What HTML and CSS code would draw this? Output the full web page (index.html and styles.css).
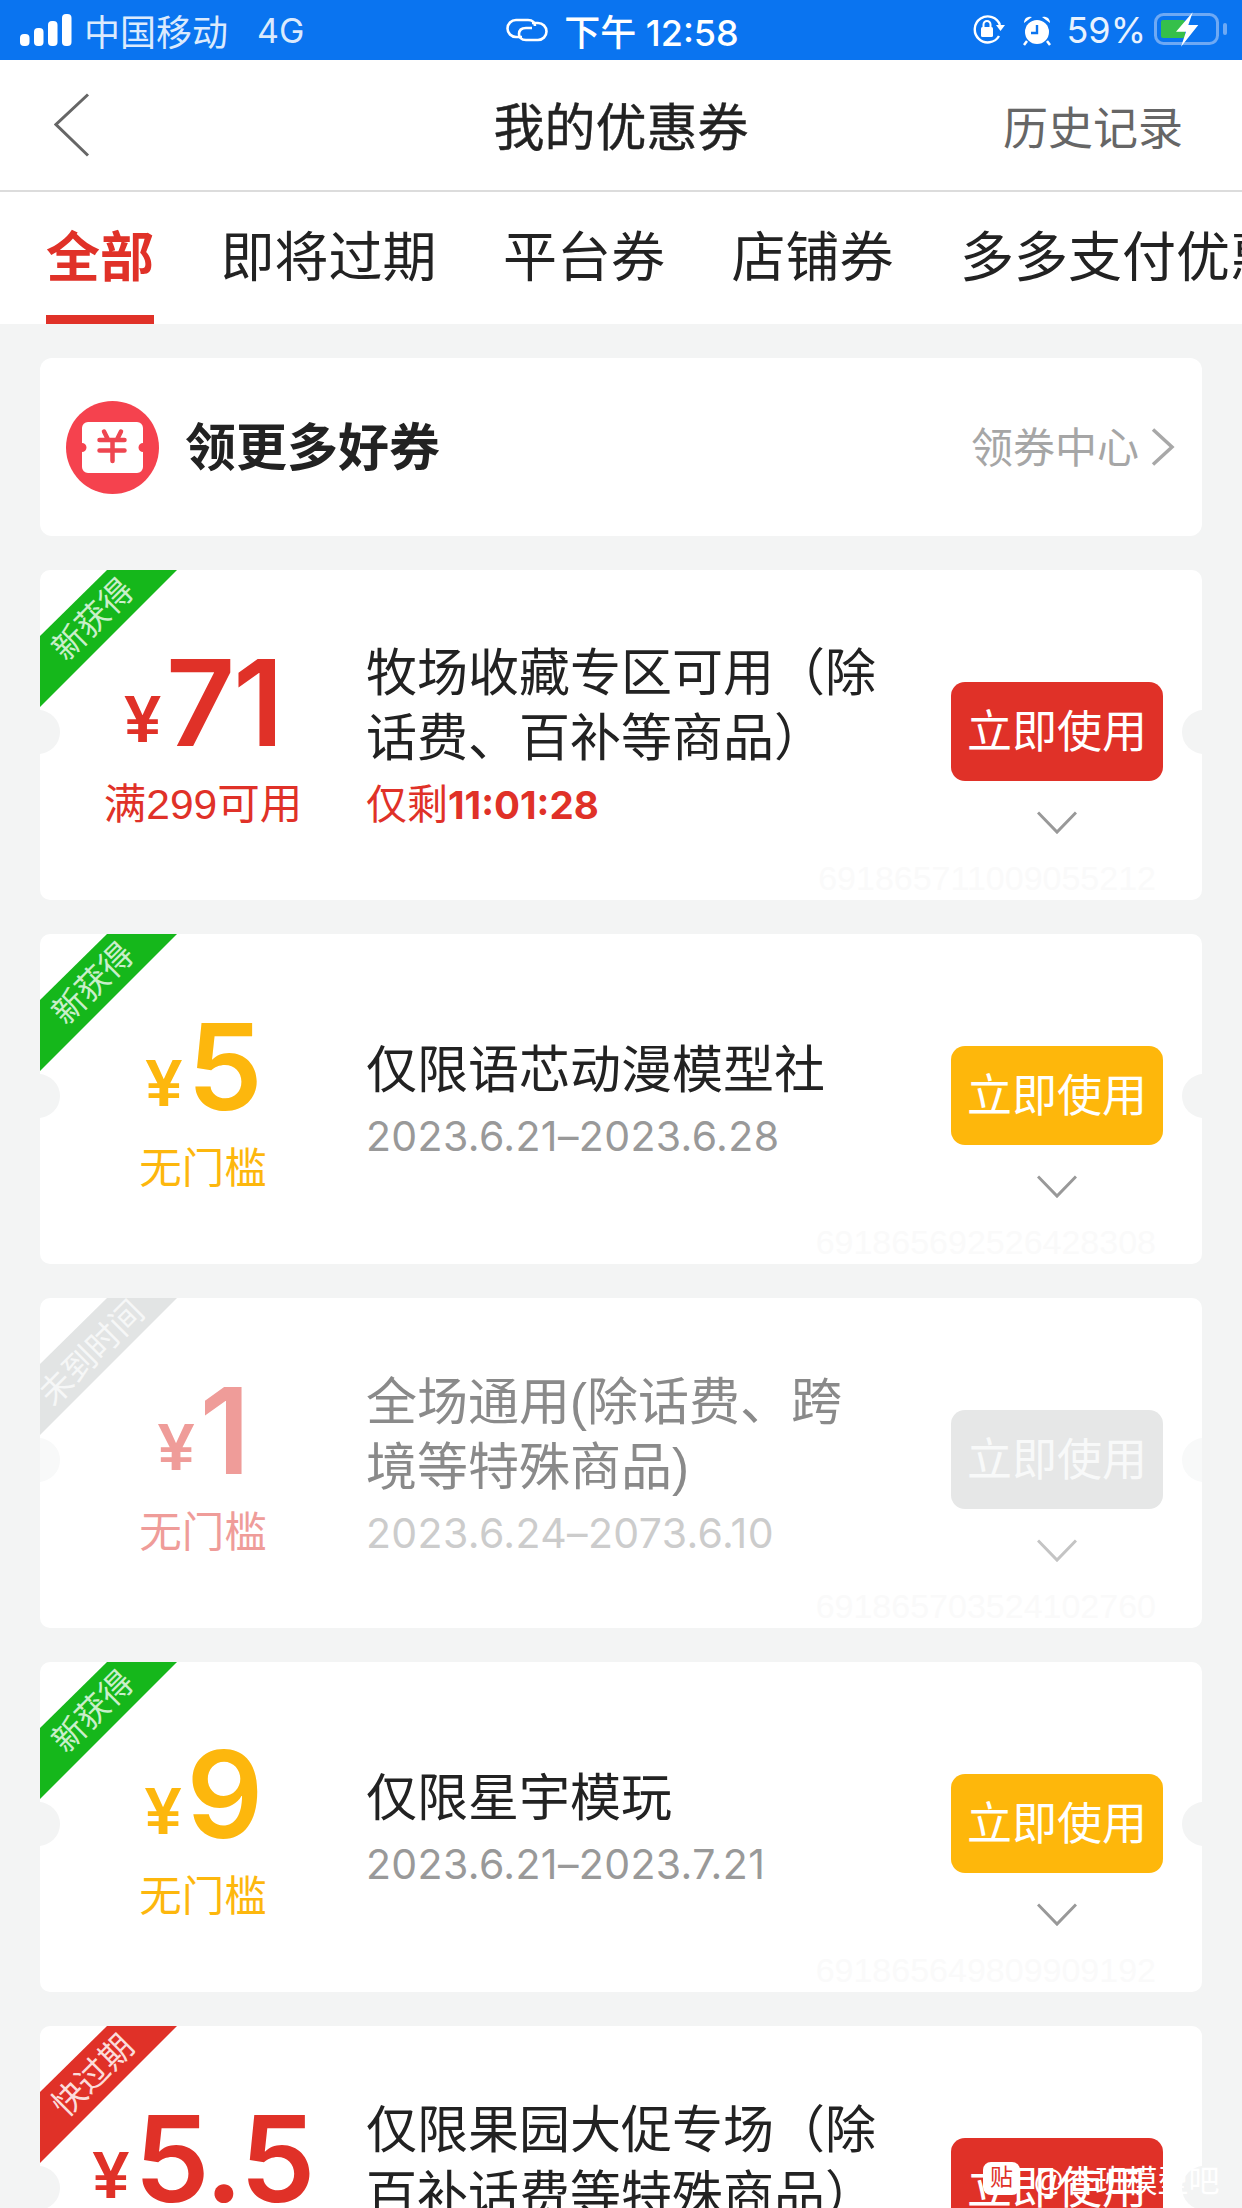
FILE: index.html
```html
<!DOCTYPE html>
<html lang="zh-CN">
<head>
<meta charset="utf-8">
<title>我的优惠券</title>
<link rel="stylesheet" href="styles.css">
</head>
<body>
<div class="page">
  <header class="status">
    <div class="status-left">
      <svg class="signal" width="52" height="32" viewBox="0 0 52 32"><g fill="#fff"><rect x="0" y="20" width="9.500" height="12" rx="4"/><rect x="14" y="14" width="9.500" height="18" rx="4"/><rect x="28" y="7" width="9.500" height="25" rx="4"/><rect x="42" y="0" width="9.500" height="32" rx="4"/></g></svg>
      <span class="carrier">中国移动</span><span class="net">4G</span>
    </div>
    <div class="status-center">
      <svg class="cloud" width="42" height="26" viewBox="0 0 42 26" fill="none" stroke="#fff" stroke-width="2.600"><path d="M16 20H10a8 8 0 0 1 0-17h12c5 0 7 3 7 6"/><path d="M26 6h6a8 8 0 0 1 0 17H20c-5 0-7-3-7-6 0-4 3-6 7-6h6"/></svg>
      <span class="clock">下午 12:58</span>
    </div>
    <div class="status-right">
      <svg class="lock" width="34" height="30" viewBox="0 0 34 30" fill="none"><path d="M27 21a13 13 0 1 1 1-11" stroke="#fff" stroke-width="2.400"/><path d="M24 10h9l-4.500 6z" fill="#fff"/><rect x="9" y="12" width="12" height="10" rx="1.500" fill="#fff"/><path d="M11.500 12V9.500a3.500 3.500 0 0 1 7 0V12" stroke="#fff" stroke-width="2"/></svg>
      <svg class="alarm" width="30" height="32" viewBox="0 0 30 32"><circle cx="15" cy="18" r="12" fill="#fff"/><path d="M2 9a6 6 0 0 1 8-6zM28 9a6 6 0 0 0-8-6z" fill="#fff"/><path d="M5 27l-3 4M25 27l3 4" stroke="#fff" stroke-width="2.500"/><path d="M15 11v8H9" fill="none" stroke="#0a74f0" stroke-width="2.400"/></svg>
      <span class="batt-pct">59%</span>
      <svg class="battery" width="74" height="40" viewBox="0 0 74 40"><rect x="1.500" y="4.500" width="62" height="29" rx="8" fill="none" stroke="#6ea9f4" stroke-width="3"/><rect x="7" y="10" width="24" height="18" rx="2" fill="#35c04a"/><rect x="69" y="13" width="4" height="12" rx="2" fill="#6ea9f4"/><polygon points="38.700,2.300 22,21.700 32,21.700 27,36.700 44.300,15 34.300,15" fill="#fff"/></svg>
    </div>
  </header>

  <nav class="nav">
    <svg class="back" width="36" height="64" viewBox="0 0 36 64" fill="none"><path d="M34 1.500 2 31.500l32 31" stroke="#666" stroke-width="3"/></svg>
    <h1 class="nav-title">我的优惠券</h1>
    <span class="nav-link">历史记录</span>
  </nav>

  <div class="tabs">
    <span class="tab tab-active">全部</span>
    <span class="tab">即将过期</span>
    <span class="tab">平台券</span>
    <span class="tab">店铺券</span>
    <span class="tab">多多支付优惠券</span>
  </div>

  <main class="list">
    <section class="banner">
      <div class="banner-left">
        <svg class="banner-icon" width="93" height="93" viewBox="0 0 93 93"><circle cx="46.500" cy="46.500" r="46.500" fill="#f5424e"/><path d="M22 21h49a6 6 0 0 1 6 6v15a4.500 4.500 0 0 0 0 9v15a6 6 0 0 1-6 6H22a6 6 0 0 1-6-6V51a4.500 4.500 0 0 0 0-9V27a6 6 0 0 1 6-6z" fill="#fff"/><path d="M33.500 39h25M33.500 49.500h25M46.500 39v21M38 30.500l3.500 7M55 30.500l-3.500 7" stroke="#ee4650" stroke-width="4.500" stroke-linecap="round" fill="none"/></svg>
        <span class="banner-title">领更多好券</span>
      </div>
      <div class="banner-right">
        <span class="banner-link">领券中心</span>
        <svg width="24" height="38" viewBox="0 0 24 38" fill="none"><path d="M2 1.500 21 19 2 36.500" stroke="#a8a8a8" stroke-width="3.500"/></svg>
      </div>
    </section>

    <article class="coupon">
      <i class="notch notch-l"></i><i class="notch notch-r"></i>
      <svg class="ribbon" width="137" height="137" viewBox="0 0 137 137"><polygon class="r-green" points="67,0 137,0 0,137 0,66"/></svg>
      <span class="ribbon-text">新获得</span>
      <div class="price price-red">
        <div class="amount"><span class="yen">¥</span><span class="num">71</span></div>
        <div class="cond">满299可用</div>
      </div>
      <div class="info">
        <div class="title">牧场收藏专区可用（除<br>话费、百补等商品）</div>
        <div class="date date-red">仅剩<b>11:01:28</b></div>
      </div>
      <div class="action">
        <span class="btn btn-red">立即使用</span>
        <svg class="chev" width="40" height="24" viewBox="0 0 40 24" fill="none"><path d="M1 1.500 20 21 39 1.500" stroke="#999" stroke-width="3"/></svg>
      </div>
      <span class="code">691865711009055212</span>
    </article>

    <article class="coupon">
      <i class="notch notch-l"></i><i class="notch notch-r"></i>
      <svg class="ribbon" width="137" height="137" viewBox="0 0 137 137"><polygon class="r-green" points="67,0 137,0 0,137 0,66"/></svg>
      <span class="ribbon-text">新获得</span>
      <div class="price price-amber">
        <div class="amount"><span class="yen">¥</span><span class="num">5</span></div>
        <div class="cond">无门槛</div>
      </div>
      <div class="info">
        <div class="title">仅限语芯动漫模型社</div>
        <div class="date">2023.6.21–2023.6.28</div>
      </div>
      <div class="action">
        <span class="btn btn-amber">立即使用</span>
        <svg class="chev" width="40" height="24" viewBox="0 0 40 24" fill="none"><path d="M1 1.500 20 21 39 1.500" stroke="#999" stroke-width="3"/></svg>
      </div>
      <span class="code">691865692526428308</span>
    </article>

    <article class="coupon coupon-off">
      <i class="notch notch-l"></i><i class="notch notch-r"></i>
      <svg class="ribbon" width="137" height="137" viewBox="0 0 137 137"><polygon class="r-grey" points="67,0 137,0 0,137 0,66"/></svg>
      <span class="ribbon-text ribbon-text-long">未到时间</span>
      <div class="price price-pale">
        <div class="amount"><span class="yen">¥</span><span class="num">1</span></div>
        <div class="cond">无门槛</div>
      </div>
      <div class="info">
        <div class="title">全场通用(除话费、跨<br>境等特殊商品)</div>
        <div class="date">2023.6.24–2073.6.10</div>
      </div>
      <div class="action">
        <span class="btn btn-grey">立即使用</span>
        <svg class="chev" width="40" height="24" viewBox="0 0 40 24" fill="none"><path d="M1 1.500 20 21 39 1.500" stroke="#c4c4c4" stroke-width="3"/></svg>
      </div>
      <span class="code">691865703524102760</span>
    </article>

    <article class="coupon">
      <i class="notch notch-l"></i><i class="notch notch-r"></i>
      <svg class="ribbon" width="137" height="137" viewBox="0 0 137 137"><polygon class="r-green" points="67,0 137,0 0,137 0,66"/></svg>
      <span class="ribbon-text">新获得</span>
      <div class="price price-amber">
        <div class="amount"><span class="yen">¥</span><span class="num">9</span></div>
        <div class="cond">无门槛</div>
      </div>
      <div class="info">
        <div class="title">仅限星宇模玩</div>
        <div class="date">2023.6.21–2023.7.21</div>
      </div>
      <div class="action">
        <span class="btn btn-amber">立即使用</span>
        <svg class="chev" width="40" height="24" viewBox="0 0 40 24" fill="none"><path d="M1 1.500 20 21 39 1.500" stroke="#999" stroke-width="3"/></svg>
      </div>
      <span class="code">691865649809909192</span>
    </article>

    <article class="coupon coupon-last">
      <i class="notch notch-l"></i><i class="notch notch-r"></i>
      <svg class="ribbon" width="137" height="137" viewBox="0 0 137 137"><polygon class="r-red" points="67,0 137,0 0,137 0,66"/></svg>
      <span class="ribbon-text">快过期</span>
      <div class="price price-red">
        <div class="amount"><span class="yen">¥</span><span class="num">5.5</span></div>
      </div>
      <div class="info info-top">
        <div class="title">仅限果园大促专场（除<br>百补话费等特殊商品）</div>
      </div>
      <div class="action">
        <span class="btn btn-red">立即使用</span>
      </div>
    </article>
  </main>

  <div class="watermark">
    <span class="wm-icon">贴</span><span class="wm-text">@杏班模型吧</span>
  </div>
</div>
</body>
</html>
```

FILE: styles.css
```css
* { box-sizing: border-box; }
html, body { margin: 0; padding: 0; }
body {
  width: 1242px;
  height: 2208px;
  overflow: hidden;
  background: #f3f4f4;
  font-family: "Liberation Sans", "Noto Sans CJK SC", sans-serif;
  color: #222;
}
.page { position: relative; width: 1242px; height: 2208px; overflow: hidden; }

/* status bar */
.status {
  height: 60px;
  background: #0a74f0;
  color: #fff;
  display: grid;
  grid-template-columns: 1fr auto 1fr;
  align-items: center;
  padding: 0 14px 0 20px;
  font-family: Inter, "Noto Sans CJK SC", sans-serif;
}
.status-left, .status-center, .status-right { display: flex; align-items: center; }
.status-left { font-size: 36px; color: #dbeafd; }
.signal { margin-right: 12px; }
.net { margin-left: 29px; font-size: 34px; }
.status-center { font-size: 36px; margin-right: 3px; }
.cloud { margin-right: 16px; }
.clock { font-weight: 500; }
.status-right { justify-content: flex-end; font-size: 36px; }
.lock { margin-right: 16px; }
.alarm { margin-right: 14px; }
.batt-pct { margin-right: 8px; color: #e8f2fe; }

/* nav */
.nav {
  height: 132px;
  background: #fff;
  border-bottom: 2px solid #dcdcdc;
  display: flex;
  align-items: center;
  justify-content: space-between;
  padding: 0 59px 0 54px;
  position: relative;
}
.nav-title {
  position: absolute;
  left: 0;
  right: 0;
  margin: 0;
  padding-bottom: 2px;
  text-align: center;
  font-size: 51px;
  font-weight: 400;
  color: #222;
  -webkit-text-stroke: 0.4px #222;
}
.nav-link { font-size: 45px; color: #666; }

/* tabs */
.tabs {
  height: 132px;
  background: #fff;
  display: flex;
  align-items: center;
  gap: 66.500px;
  padding-left: 46px;
  white-space: nowrap;
  overflow: hidden;
}
.tab { font-size: 54px; color: #222; height: 132px; line-height: 132px; }
.tab-active {
  width: 108px;
  text-align: center;
  color: #e03128;
  font-weight: 700;
  border-bottom: 9px solid #e03128;
}

/* list */
.list {
  display: flex;
  flex-direction: column;
  gap: 34px;
  padding: 34px 40px 0;
}
.banner {
  height: 178px;
  background: #fff;
  border-radius: 12px;
  display: flex;
  align-items: center;
  justify-content: space-between;
  padding: 0 27px 0 26px;
}
.banner-left, .banner-right { display: flex; align-items: center; }
.banner-icon { margin-right: 26px; }
.banner-title { font-size: 51px; font-weight: 700; color: #222; padding-bottom: 6px; }
.banner-link { font-size: 42px; color: #a6a6a6; margin-right: 12px; padding-bottom: 6px; }

/* coupon */
.coupon {
  position: relative;
  flex: none;
  height: 330px;
  background: #fff;
  border-radius: 10px;
  overflow: hidden;
  display: grid;
  grid-template-columns: 326px 1fr 212px;
  padding-right: 39px;
}
.notch {
  position: absolute;
  top: 140px;
  width: 44px;
  height: 44px;
  border-radius: 50%;
  background: #f3f4f4;
}
.notch-l { left: -24px; }
.notch-r { right: -24px; }
.coupon-off .notch { background: #f8f9f9; }
.ribbon { position: absolute; left: 0; top: 0; }
.r-green { fill: #15b71b; }
.r-grey { fill: #e2e4e4; }
.r-red { fill: #e03128; }
.ribbon-text {
  position: absolute;
  left: 5px;
  top: 33px;
  width: 90px;
  line-height: 40px;
  text-align: center;
  font-size: 33px;
  color: #c9efca;
  white-space: nowrap;
  transform: rotate(-45deg);
}
.coupon-last .ribbon-text { color: #fbdcda; }
.ribbon-text.ribbon-text-long { left: -19px; top: 35px; width: 142px; color: #f6f7f7; }

.price { padding-top: 72px; text-align: center; }
.amount { height: 122px; line-height: 122px; white-space: nowrap; }
.yen { font-size: 66px; font-weight: 700; vertical-align: 4px; margin-right: 5px; }
.num { font-family: Inter, "Liberation Sans", sans-serif; font-size: 120px; font-weight: 600; letter-spacing: -2px; }
.cond { margin-top: 13px; font-size: 42.500px; line-height: 56px; }
.price-red { color: #e03128; }
.price-amber { color: #fdb70d; }
.price-pale { color: #ef9c99; }

.info {
  display: flex;
  flex-direction: column;
  justify-content: center;
  padding-top: 11px;
}
.info-top { justify-content: flex-start; padding-top: 72px; }
.title { font-size: 51px; line-height: 65px; color: #222; white-space: nowrap; }
.date {
  margin-top: -1px;
  font-family: Inter, "Noto Sans CJK SC", sans-serif;
  font-size: 41px;
  letter-spacing: 0.370px;
  line-height: 69px;
  color: #999;
  white-space: nowrap;
}
.date-red { color: #e03128; letter-spacing: 0; }
.date-red b { font-size: 38.500px; }
.coupon-off .title { color: #8a8a8a; }
.coupon-off .date { color: #cccccc; }

.action { display: flex; flex-direction: column; align-items: center; padding-top: 112px; }
.btn {
  width: 212px;
  height: 99px;
  border-radius: 14px;
  color: #fff;
  font-size: 45px;
  line-height: 101px;
  text-align: center;
}
.btn-red { background: #e03128; }
.btn-amber { background: #feb70b; }
.btn-grey { background: #e6e7e7; color: #f8f9f9; }
.chev { margin-top: 30px; }
.code {
  position: absolute;
  right: 46px;
  top: 288px;
  font-size: 34px;
  line-height: 40px;
  color: #fafafa;
}

/* watermark */
.watermark {
  position: absolute;
  left: 983px;
  top: 2156px;
  display: flex;
  align-items: center;
  color: #fff;
  font-size: 31px;
  white-space: nowrap;
}
.wm-icon {
  width: 37px;
  height: 33px;
  border-radius: 8px;
  background: #fff;
  color: #e03128;
  font-size: 23px;
  line-height: 31px;
  text-align: center;
  margin-right: 13px;
}
```
